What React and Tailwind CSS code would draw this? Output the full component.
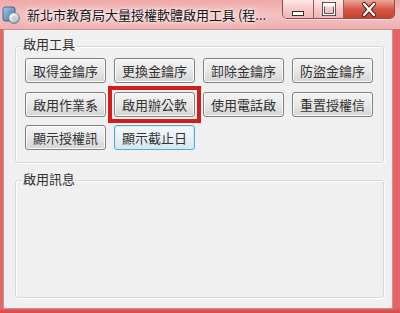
import React from 'react';

const rows = [
  ['取得金鑰序', '更換金鑰序', '卸除金鑰序', '防盜金鑰序'],
  ['啟用作業系', '啟用辦公軟', '使用電話啟', '重置授權信'],
  ['顯示授權訊', '顯示截止日'],
];

function AppIcon() {
  return (
    <svg width="18" height="18" viewBox="0 0 18 18">
      <defs>
        <linearGradient id="box" x1="0" y1="0" x2="1" y2="1">
          <stop offset="0" stopColor="#a9c8e8" />
          <stop offset="1" stopColor="#3d6fa8" />
        </linearGradient>
        <radialGradient id="disc" cx="0.4" cy="0.35" r="0.7">
          <stop offset="0" stopColor="#ffffff" />
          <stop offset="0.6" stopColor="#c9d3dc" />
          <stop offset="1" stopColor="#7f8c98" />
        </radialGradient>
      </defs>
      <rect x="1" y="1" width="12" height="14" rx="2" fill="url(#box)" stroke="#2f5580" strokeWidth="0.8" />
      <circle cx="12" cy="12" r="5.5" fill="url(#disc)" stroke="#5d6b78" strokeWidth="0.6" />
      <circle cx="12" cy="12" r="1.4" fill="#eef3f7" stroke="#6d7a86" strokeWidth="0.5" />
    </svg>
  );
}

function CaptionButtons() {
  return (
    <div className="absolute top-0 left-[282px] flex h-[19px] overflow-hidden rounded-b-[5px] border border-t-0 border-[#8c5050] shadow-[0_1px_0_rgba(255,255,255,0.6)]">
      <div className="flex w-[31px] items-center justify-center border-r border-[#9a5a5a] bg-linear-to-b from-[#fde8e8] via-[#f5caca] to-[#eeb6b6]">
        <svg width="14" height="19" viewBox="0 0 14 19">
          <rect x="1.5" y="11.5" width="11" height="4" fill="#fff" stroke="#3a2a2a" strokeWidth="1" />
        </svg>
      </div>
      <div className="flex w-[30px] items-center justify-center border-r border-[#9a5a5a] bg-linear-to-b from-[#fde8e8] via-[#f5caca] to-[#eeb6b6]">
        <svg width="14" height="19" viewBox="0 0 14 19">
          <rect x="1.5" y="3.5" width="11" height="11" fill="none" stroke="#3a2a2a" strokeWidth="3" />
          <rect x="1.5" y="3.5" width="11" height="11" fill="none" stroke="#fff" strokeWidth="1.4" />
          <rect x="1.5" y="3.5" width="11" height="3" fill="#fff" />
        </svg>
      </div>
      <div className="flex w-[50px] items-center justify-center bg-linear-to-b from-[#eba79c] via-[#d65a48] to-[#c7402f]">
        <svg width="16" height="19" viewBox="0 0 16 19">
          <path d="M3 4 L13 15 M13 4 L3 15" stroke="#4a1a14" strokeWidth="4.2" strokeLinecap="round" />
          <path d="M3 4 L13 15 M13 4 L3 15" stroke="#fff" strokeWidth="2.4" strokeLinecap="round" />
        </svg>
      </div>
    </div>
  );
}

function WinButton({ label, focused, marked }) {
  const base = 'relative flex h-[25px] w-[81px] items-center justify-center rounded-[3px] border text-[13px] leading-none text-[#333]';
  const look = focused
    ? 'border-[#5fa6d2] bg-linear-to-b from-[#f5fafd] via-[#e8f2f8] to-[#d6e5ee] shadow-[inset_0_0_0_1px_#cfeaf8]'
    : 'border-[#808080] bg-linear-to-b from-[#f4f4f4] via-[#e8e8e8] to-[#d4d4d4] shadow-[inset_0_0_0_1px_#fbfbfb]';
  return (
    <div className={`${base} ${look}`}>
      {label}
      {marked && <span className="absolute -inset-[7px] border-[4px] border-[#d31d1d]" />}
    </div>
  );
}

function GroupBox({ title, className, titleOffset, children }) {
  return (
    <div className={`flex flex-col rounded-[3px] border border-[#d7dadd] shadow-[inset_1px_1px_0_#fff,1px_1px_0_#fff] ${className}`}>
      <span className={`ml-[6px] self-start bg-[#f0f0f0] px-[1px] text-[13px] leading-[16px] text-[#333] ${titleOffset}`}>
        {title}
      </span>
      {children}
    </div>
  );
}

export default function App() {
  return (
    <div className="relative flex h-[313px] w-[400px] flex-col overflow-hidden bg-[#e26464] font-['Noto_Sans_CJK_TC','Noto_Sans_CJK_SC',sans-serif]">
      <div className="flex h-[29px] items-center bg-linear-to-b from-[#f0a8a8] via-[#f4c2c2] to-[#efb0b0] pl-[2px]">
        <AppIcon />
        <span className="ml-[7px] text-[13px] leading-none text-[#151515] [text-shadow:0_0_6px_#fff,0_0_3px_#fff]">
          新北市教育局大量授權軟體啟用工具 (程...
        </span>
      </div>
      <CaptionButtons />

      <div className="ml-[3px] mr-[7px] flex h-[280px] flex-col border border-[#c99393] bg-[#f0f0f0] pl-[11px] pr-[8px] pt-[16px]">
        <GroupBox title="啟用工具" className="h-[117px]" titleOffset="-mt-[11px]">
          <div className="mt-[6px] flex flex-col pl-[9px]">
            {rows.map((row, r) => (
              <div key={r} className={`flex gap-[8px] ${r === 1 ? 'mt-[9px]' : r === 2 ? 'mt-[8px]' : ''}`}>
                {row.map((label, i) => (
                  <WinButton key={label} label={label} focused={r === 2 && i === 1} marked={r === 1 && i === 1} />
                ))}
              </div>
            ))}
          </div>
        </GroupBox>
        <GroupBox title="啟用訊息" className="mt-[17px] h-[118px]" titleOffset="-mt-[10px]" />
      </div>
      <div className="flex-1 bg-linear-to-b from-[#e65a5a] to-[#d84848]" />
    </div>
  );
}
